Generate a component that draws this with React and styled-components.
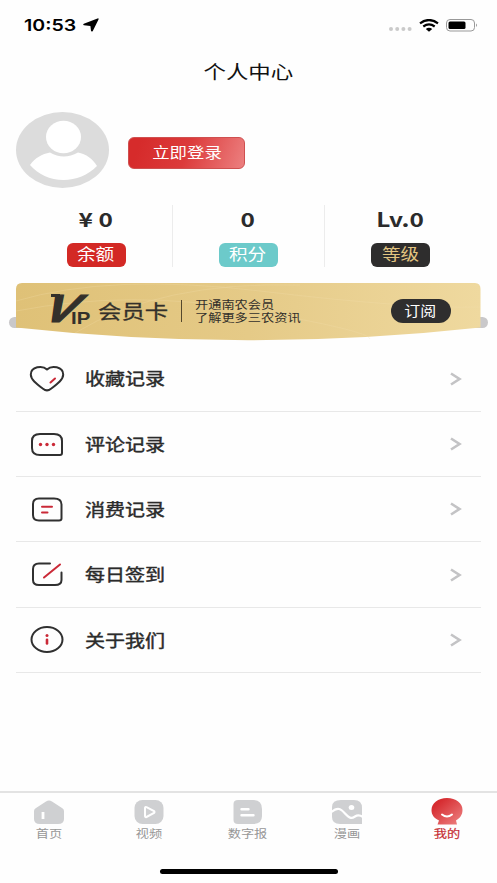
import React from "react"
import styled, { createGlobalStyle } from "styled-components"

const GlobalStyle = createGlobalStyle`
  * {
    box-sizing: border-box;
  }
  body {
    margin: 0;
    background: #fefefe;
    font-family: "Noto Sans CJK SC", sans-serif;
    color: #2b2b2b;
  }
  svg {
    display: block;
    flex-shrink: 0;
  }
`

const Page = styled.div`
  width: 497px;
  height: 883px;
  display: flex;
  flex-direction: column;
  overflow: hidden;
`

// wide lettering used all over the app
const Wide = styled.span`
  display: block;
  flex-shrink: 0;
  white-space: nowrap;
  line-height: 1;
  font-size: ${props => props.$size}px;
  transform: scaleX(${props => props.$scale || 1.2});
  transform-origin: ${props => props.$origin || "center"};
  -webkit-text-stroke: ${props => props.$stroke || 0}px currentColor;
`

const StatusBar = styled.header`
  display: flex;
  align-items: center;
  height: 50px;
  padding: 0 19px 0 24px;
  color: #000;
`
const Clock = styled(Wide)`
  width: 59px;
  font-family: Inter, sans-serif;
  font-weight: 600;
`
const StatusIcons = styled.div`
  display: flex;
  align-items: center;
  margin-left: auto;
`

const Title = styled.h1`
  display: flex;
  justify-content: center;
  align-items: center;
  height: 42px;
  margin: 0;
  font-weight: normal;
  color: #111;
`

const Profile = styled.section`
  display: flex;
  align-items: center;
  height: 113px;
  padding: 2px 0 0 16px;
`
const LoginButton = styled.button`
  display: flex;
  align-items: center;
  justify-content: center;
  width: 117px;
  height: 32px;
  margin: 6px 0 0 19px;
  padding: 0;
  border: 1px solid #cf5050;
  border-radius: 6px;
  background: linear-gradient(110deg, #d62b2b 10%, #dc3b3b 50%, #ec8080 100%);
  color: #fff;
  font-family: inherit;
`

const Stats = styled.section`
  display: grid;
  grid-template-columns: 152px 152px 152px;
  height: 61px;
  padding-left: 21px;
`
const Stat = styled.div`
  display: flex;
  flex-direction: column;
  align-items: center;
  padding: 4px 1px 0 0;
  border-right: ${props => (props.$last ? 0 : 1)}px solid #ececec;
`
const Badge = styled.div`
  display: flex;
  align-items: center;
  justify-content: center;
  width: 59px;
  height: 24px;
  margin-top: 14px;
  padding-bottom: 1px;
  border-radius: 6px;
  background: ${props => props.$bg};
  color: ${props => props.$color};
`

const Banner = styled.section`
  position: relative;
  width: 497px;
  height: 63px;
  margin-top: 15px;
`
const BannerArt = styled.svg`
  position: absolute;
  left: 0;
  top: 0;
`
const BannerContent = styled.div`
  position: relative;
  display: flex;
  align-items: center;
  height: 60px;
  padding: 0 46px 0 51px;
  color: #33302b;
`
const Vip = styled.div`
  position: relative;
  display: flex;
  align-items: flex-end;
  width: 47px;
  height: 32px;
  margin-top: -4px;
  font-family: "Liberation Sans", sans-serif;
  font-weight: bold;

  /* flag on the left arm of the V */
  &::before {
    content: "";
    position: absolute;
    left: 0;
    top: 1px;
    width: 9px;
    height: 3px;
    background: #33302b;
  }
`
const VipV = styled.span`
  width: 32px;
  height: 32px;
  margin-left: -12px;
  font-size: 39px;
  line-height: 32px;
  transform: skewX(-31deg) scaleX(1.25);
  transform-origin: left 30px;
  -webkit-text-stroke: 1.2px currentColor;
`
const VipRest = styled(Wide)`
  margin-bottom: -2px;
`
const CardName = styled(Wide)`
  width: 72px;
`
const BannerLine = styled.div`
  width: 1px;
  height: 22px;
  margin-left: 11px;
  background: #55482c;
`
const BannerText = styled.div`
  display: flex;
  flex-direction: column;
  gap: 2px;
  margin: -1px 0 0 13px;
`
const Subscribe = styled.button`
  display: flex;
  align-items: center;
  justify-content: center;
  width: 60px;
  height: 24px;
  margin: -1px 0 0 auto;
  padding: 0 1px 0 0;
  border: 0;
  border-radius: 12px;
  background: #2f2e2e;
  color: #fff;
  font-family: inherit;
`

const Menu = styled.main`
  flex: 1;
  margin: 0 16px;
  padding-top: 2.6px;
`
const MenuRow = styled.div`
  display: flex;
  align-items: center;
  height: 65.3px;
  padding: 0 19px 0 13px;
  border-bottom: 1px solid #e8e8e8;
`
const MenuLabel = styled(Wide)`
  margin-left: 20px;
`
const Arrow = styled.svg`
  margin-left: auto;
`

const TabBar = styled.nav`
  display: grid;
  grid-template-columns: repeat(5, 99.4px);
  height: 78px;
  border-top: 2px solid #e3e3e3;
`
const Tab = styled.div`
  display: flex;
  flex-direction: column;
  align-items: center;
  gap: 3px;
  padding: 5px 1px 0 0;
  color: ${props => (props.$active ? "#c62f35" : "#979797")};
`
const HomeIndicator = styled.div`
  width: 178px;
  height: 5px;
  margin: 0 auto 9px 160px;
  border-radius: 3px;
  background: #000;
`

const Avatar = () => (
  <svg width="93" height="76" viewBox="0 0 93 76">
    <ellipse cx="46.5" cy="38" rx="46.5" ry="38" fill="#dcdcdc" />
    <ellipse cx="47.5" cy="25" rx="17.5" ry="16.2" fill="#fff" />
    <path d="M34 40.5Q47.5 48.5 62 40.5C70 42 77 47 81 54C72 63 60 68 47.5 68C34 68 22 62 14 53C19 46 26 42 34 40.5Z" fill="#fff" />
  </svg>
)

const stats = [
  { value: "¥ 0", label: "余额", bg: "#d32925", color: "#fff" },
  { value: "0", label: "积分", bg: "#6ccaca", color: "#fff" },
  { value: "Lv.0", label: "等级", bg: "#2e2d2d", color: "#e3c580" },
]

const dark = { fill: "none", stroke: "#303030", strokeWidth: 2, strokeLinecap: "round", strokeLinejoin: "round" }
const red = { fill: "none", stroke: "#ca2937", strokeWidth: 2, strokeLinecap: "round" }

const menu = [
  {
    label: "收藏记录",
    icon: (
      <>
        <path {...dark} d="M18 4.5C13.5 0 1.8 1.5 1.8 9.5C1.8 14.5 7 18.5 14 23.8Q18 27 22 23.8C29 18.5 34.2 14.5 34.2 9.5C34.2 1.5 22.5 0 18 4.5Z" />
        <path {...red} d="M21.5 17.5L26 13.5" />
      </>
    ),
  },
  {
    label: "评论记录",
    icon: (
      <>
        <path {...dark} d="M11 3H25Q33 3 33 10V22Q33 24 31 24H11Q3 24 3 17V10Q3 3 11 3Z" />
        <circle cx="11.5" cy="13.5" r="1.7" fill="#ca2937" />
        <circle cx="18" cy="13.5" r="1.7" fill="#ca2937" />
        <circle cx="24.5" cy="13.5" r="1.7" fill="#ca2937" />
      </>
    ),
  },
  {
    label: "消费记录",
    icon: (
      <>
        <path {...dark} d="M10 2.5H25Q32.5 2.5 32.5 8.5V22.5Q32.5 24.5 30 24.5H10Q4 24.5 4 19V8Q4 2.5 10 2.5Z" />
        <path {...red} d="M13 10.7H23M13 16.5H18.5" />
      </>
    ),
  },
  {
    label: "每日签到",
    icon: (
      <>
        <path {...dark} d="M21 2.5H10Q4 2.5 4 8V19Q4 24 10 24H26Q32.5 24 32.5 19V11.5" />
        <path {...red} d="M15 16.5L31 3.5" />
      </>
    ),
  },
  {
    label: "关于我们",
    icon: (
      <>
        <ellipse {...dark} cx="18" cy="13.5" rx="15.5" ry="12.5" />
        <circle cx="18" cy="9.6" r="1.5" fill="#ca2937" />
        <path {...red} strokeWidth="2.6" d="M18 13.8V17.5" />
      </>
    ),
  },
]

const grey = "#cfd0d2"

const tabs = [
  {
    label: "首页",
    icon: (
      <>
        <path fill={grey} d="M3 13Q3 11 5 10L15 3.5Q18 1.5 21 3.5L31 10Q33 11 33 13V21Q33 26 27 26H9Q3 26 3 21Z" />
        <path d="M12 14V21" stroke="#fff" strokeWidth="2.8" />
      </>
    ),
  },
  {
    label: "视频",
    icon: (
      <>
        <rect x="3.5" y="2" width="29" height="24" rx="8" fill={grey} />
        <path d="M14 10Q14 8.5 15.5 9.2L23 13Q24 14 23 15L15.5 19Q14 19.5 14 18Z" fill="none" stroke="#fff" strokeWidth="2" />
      </>
    ),
  },
  {
    label: "数字报",
    icon: (
      <>
        <path fill={grey} d="M8 2H23Q32 2 32 11V18Q32 26 23 26H8Q3.5 26 3.5 22V6Q3.5 2 8 2Z" />
        <path d="M11.5 11.3H18.5M11.5 17.3H23.5" stroke="#fff" strokeWidth="2.4" strokeLinecap="round" />
      </>
    ),
  },
  {
    label: "漫画",
    icon: (
      <>
        <path fill={grey} d="M12 2H25Q33 2 33 10V26H11Q3 26 3 19V9Q3 2 12 2Z" />
        <path d="M2.5 14C9 8.5 12 11 16 15.5C21 21 23 20.5 26 18.5C29 16.5 31 17 34 19" fill="none" stroke="#fff" strokeWidth="2.2" />
        <ellipse cx="22.5" cy="9.5" rx="2.8" ry="2.5" fill="#fff" />
      </>
    ),
  },
  {
    label: "我的",
    active: true,
    icon: (
      <>
        <defs>
          <linearGradient id="mine" x1="0" y1="0" x2="1" y2="1">
            <stop offset="0.2" stopColor="#d62c30" />
            <stop offset="1" stopColor="#ee8585" />
          </linearGradient>
        </defs>
        <path fill="url(#mine)" d="M18 0C27 0 33.5 5 33.5 12C33.5 17 31 20 27 22.5L28 26.5H8.5L10 22.5C5 20 2.5 17 2.5 12C2.5 5 9 0 18 0Z" />
        <path d="M13 16.5Q18 20.5 23 16.5" fill="none" stroke="#fff" strokeWidth="2" strokeLinecap="round" />
      </>
    ),
  },
]

const App = () => (
  <>
    <GlobalStyle />
    <Page>
      <StatusBar>
        <Clock $size={16.3} $origin="left">10:53</Clock>
        <svg width="16" height="14" viewBox="0 0 16 14">
          <path d="M14.5 0.5Q16 0 15.5 1.4L9.8 13Q8.5 14.2 8 12.8L7.4 8L1 7.2Q-0.5 6.6 0.8 5.7Z" fill="#000" />
        </svg>
        <StatusIcons>
          <svg width="30" height="14" viewBox="0 0 30 14">
            {[2, 8.2, 14.4, 20.6].map(x => (
              <circle key={x} cx={x} cy="11" r="2" fill="#cacaca" />
            ))}
          </svg>
          <svg width="20" height="13" viewBox="0 0 20 13">
            <path d="M1 4.3Q10 -2.3 19 4.3M4.3 7.5Q10 3.3 15.7 7.5" fill="none" stroke="#000" strokeWidth="2.2" />
            <path d="M6.8 10Q10 7.7 13.2 10L10 12.8Z" fill="#000" />
          </svg>
          <svg width="39" height="14" viewBox="0 0 39 14">
            <rect x="7.5" y="1.5" width="28" height="11.5" rx="3.5" fill="none" stroke="#999" />
            <rect x="9.5" y="3.5" width="17" height="7.5" rx="1.5" fill="#000" />
            <path d="M37 5.5Q39 7 37 9Z" fill="#999" />
          </svg>
        </StatusIcons>
      </StatusBar>
      <Title>
        <Wide $size={18.7}>个人中心</Wide>
      </Title>
      <Profile>
        <Avatar />
        <LoginButton>
          <Wide $size={14.5}>立即登录</Wide>
        </LoginButton>
      </Profile>
      <Stats>
        {stats.map((stat, index) => (
          <Stat key={stat.label} $last={index === stats.length - 1}>
            <Wide $size={19.5} $scale={1.25} as="strong">{stat.value}</Wide>
            <Badge $bg={stat.bg} $color={stat.color}>
              <Wide $size={15.5}>{stat.label}</Wide>
            </Badge>
          </Stat>
        ))}
      </Stats>
      <Banner>
        <BannerArt width="497" height="63" viewBox="0 0 497 63">
          <defs>
            <linearGradient id="gold" x1="0" y1="0" x2="1" y2="0">
              <stop offset="0" stopColor="#dfc177" />
              <stop offset="0.5" stopColor="#e5ca87" />
              <stop offset="1" stopColor="#efd99f" />
            </linearGradient>
          </defs>
          <rect x="9" y="36" width="479" height="11" rx="5.5" fill="#c9c8ca" />
          <path d="M16 8Q16 2 22 2H475Q480.5 2 480.5 8V46.5Q248 72 16 46.5Z" fill="url(#gold)" />
          <path d="M16 20Q110 -8 260 10T480 26M16 30Q130 8 250 29T370 58M75 52Q160 0 300 4" fill="none" stroke="#f2dfae" strokeOpacity="0.25" />
        </BannerArt>
        <BannerContent>
          <Vip>
            <VipV>V</VipV>
            <VipRest $size={17} $origin="left">IP</VipRest>
          </Vip>
          <CardName $size={19.5} $origin="left" $stroke={0.3}>会员卡</CardName>
          <BannerLine />
          <BannerText>
            <Wide $size={11} $origin="left">开通南农会员</Wide>
            <Wide $size={11} $origin="left">了解更多三农资讯</Wide>
          </BannerText>
          <Subscribe>
            <Wide $size={13.3}>订阅</Wide>
          </Subscribe>
        </BannerContent>
      </Banner>
      <Menu>
        {menu.map(item => (
          <MenuRow key={item.label}>
            <svg width="36" height="27" viewBox="0 0 36 27">{item.icon}</svg>
            <MenuLabel $size={16.7} $origin="left" $stroke={0.4}>{item.label}</MenuLabel>
            <Arrow width="12" height="14" viewBox="0 0 12 14">
              <path d="M1 1.5L9.5 7L1 12.5" fill="none" stroke="#c3c3c5" strokeWidth="2.6" />
            </Arrow>
          </MenuRow>
        ))}
      </Menu>
      <TabBar>
        {tabs.map(tab => (
          <Tab key={tab.label} $active={tab.active}>
            <svg width="36" height="27" viewBox="0 0 36 27">{tab.icon}</svg>
            <Wide $size={11} $stroke={tab.active ? 0.2 : 0}>{tab.label}</Wide>
          </Tab>
        ))}
      </TabBar>
      <HomeIndicator />
    </Page>
  </>
)

export default App
